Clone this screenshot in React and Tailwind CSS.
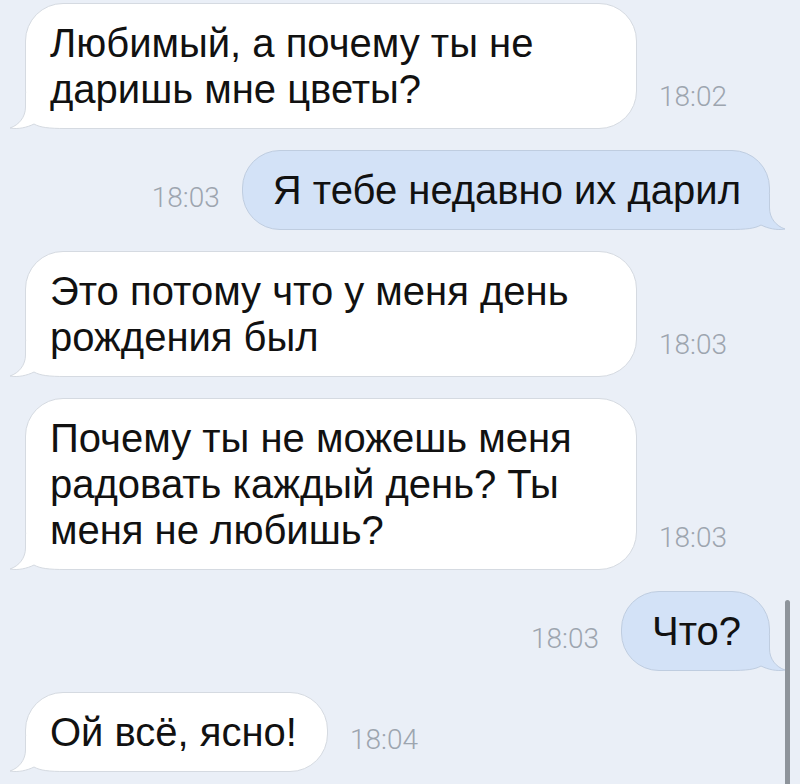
const MESSAGES = [
  { id: 1, side: 'in', time: '18:02', lines: ['Любимый, а почему ты не', 'даришь мне цветы?'], wide: true },
  { id: 2, side: 'out', time: '18:03', lines: ['Я тебе недавно их дарил'] },
  { id: 3, side: 'in', time: '18:03', lines: ['Это потому что у меня день', 'рождения был'], wide: true },
  { id: 4, side: 'in', time: '18:03', lines: ['Почему ты не можешь меня', 'радовать каждый день? Ты', 'меня не любишь?'], wide: true },
  { id: 5, side: 'out', time: '18:03', lines: ['Что?'] },
  { id: 6, side: 'in', time: '18:04', lines: ['Ой всё, ясно!'] },
];

function Tail({ out }) {
  const fill = out ? '#d3e2f7' : '#ffffff';
  const stroke = out ? '#bfcde0' : '#d5dae1';
  return (
    <svg
      width="56"
      height="36"
      viewBox="0 0 56 36"
      className={out ? 'absolute right-[-17px] bottom-[-1px] -scale-x-100' : 'absolute left-[-17px] bottom-[-1px]'}
    >
      <path d="M16.5,0 L16.5,14 C16.5,24 10,32 1,35 C9,36.5 18,34.5 25,31 C31,34.5 40,35.5 56,35.5 L56,0 Z" fill={fill} />
      <path d="M16.5,0 L16.5,14 C16.5,24 10,32 1,35 C9,36.5 18,34.5 25,31 C31,34.5 40,35.5 56,35.5" fill="none" stroke={stroke} strokeWidth="1" />
    </svg>
  );
}

function Time({ children }) {
  return (
    <span className="font-['Roboto',sans-serif] font-light text-[28px] leading-[30px] text-[#9da5af] mb-[17px] shrink-0">
      {children}
    </span>
  );
}

function Bubble({ msg }) {
  const out = msg.side === 'out';
  return (
    <div
      className={`relative rounded-[38px] border py-[16px] text-[40px] leading-[46px] text-[#111] ${
        out
          ? 'bg-[#d3e2f7] border-[#bfcde0] pl-[30px] pr-[28px]'
          : 'bg-white border-[#d5dae1] pl-[24px] pr-[30px]'
      } ${msg.wide ? 'w-[612px]' : ''}`}
    >
      <Tail out={out} />
      <div className="relative">
        {msg.lines.map((l, i) => (
          <div key={i}>{l}</div>
        ))}
      </div>
    </div>
  );
}

export default function App() {
  return (
    <div className="relative h-[784px] w-[800px] overflow-hidden bg-[#eaeff7] font-['Liberation_Sans',Arial,sans-serif]">
      <div className="flex flex-col gap-[21px] pt-[3px] pl-[25px] pr-[30px]">
        {MESSAGES.map((m) =>
          m.side === 'in' ? (
            <div key={m.id} className="flex items-end gap-[22px]">
              <Bubble msg={m} />
              <Time>{m.time}</Time>
            </div>
          ) : (
            <div key={m.id} className="flex items-end justify-end gap-[22px]">
              <Time>{m.time}</Time>
              <Bubble msg={m} />
            </div>
          )
        )}
      </div>
      {/* scroll indicator */}
      <div className="absolute right-[10px] top-[600px] h-[200px] w-[5px] rounded-full bg-[#8e949b]" />
    </div>
  );
}
